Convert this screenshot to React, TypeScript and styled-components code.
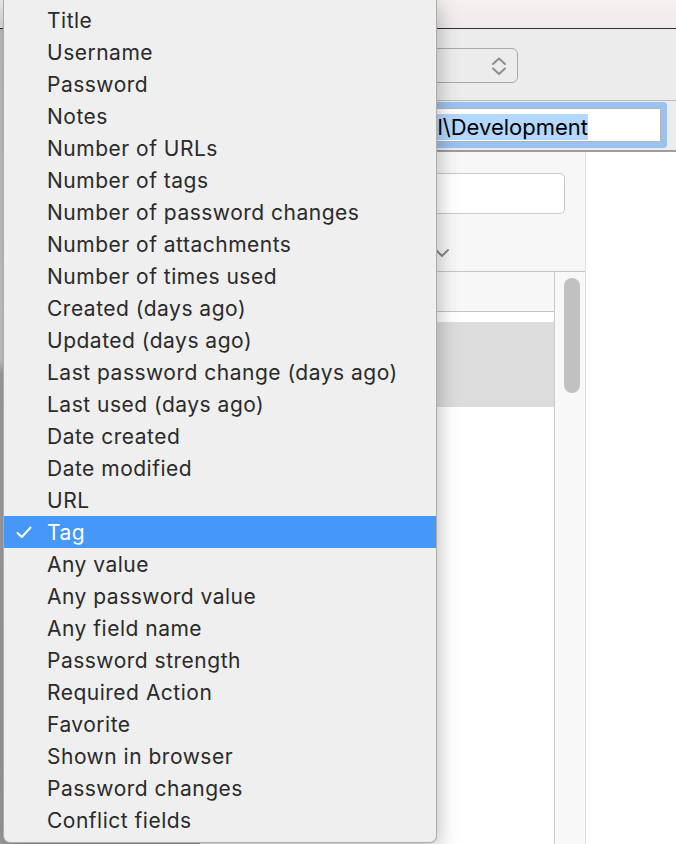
import React from 'react';
import styled, { createGlobalStyle } from 'styled-components';

const Global = createGlobalStyle`
  html, body { margin: 0; padding: 0; }
  body { width: 676px; height: 844px; overflow: hidden; font-family: Inter, "Liberation Sans", sans-serif; }
  #root { width: 676px; height: 844px; }
`;

const Stage = styled.div`
  position: relative;
  width: 676px;
  height: 844px;
  overflow: hidden;
  display: flex;
  flex-direction: column;
  background: #fff;
`;

const TitleBar = styled.div`
  flex: none;
  height: 29px;
  box-sizing: border-box;
  background: linear-gradient(#f5f1f1, #efebeb);
  border-bottom: 1px solid #2f2f2f;
`;

const Body = styled.div`
  flex: 1;
  display: flex;
  min-height: 0;
`;

const Sidebar = styled.div`
  flex: none;
  width: 200px;
  background: linear-gradient(#cbcbcb 0, #d3d3d3 330px, #aaaaaa 345px, #a3a3a3 100%);
`;

const Content = styled.div`
  flex: 1;
  display: flex;
  flex-direction: column;
  min-width: 0;
`;

const Toolbar = styled.div`
  flex: none;
  height: 72px;
  box-sizing: border-box;
  background: #ececec;
  border-bottom: 1px solid #bcbcbc;
  display: flex;
  justify-content: flex-end;
  align-items: flex-start;
  padding: 19px 158px 0 0;
`;

const PopupButton = styled.div`
  width: 240px;
  height: 35px;
  box-sizing: border-box;
  border: 1.5px solid #a9a9a9;
  border-radius: 6px;
  background: #ececec;
  display: flex;
  align-items: center;
  justify-content: flex-end;
  padding-right: 10px;
`;

const PathBar = styled.div`
  flex: none;
  height: 51px;
  box-sizing: border-box;
  background: #ececec;
  border-bottom: 2px solid #9d9d9d;
  padding: 7px 15px 0 0;
  display: flex;
  justify-content: flex-end;
  align-items: flex-start;
`;

const PathField = styled.div`
  width: 420px;
  height: 34px;
  box-sizing: border-box;
  background: #fff;
  border: 1px solid #b4b4b4;
  border-radius: 1px;
  box-shadow: 0 0 0 6px #99c2ef;
  display: flex;
  justify-content: flex-end;
  align-items: center;
  padding-right: 72px;
  overflow: hidden;
  white-space: nowrap;
`;

const Selected = styled.span`
  display: inline-block;
  height: 26px;
  line-height: 26px;
  margin-top: 4px;
  font-size: 22px;
  color: #000;
  background: #b3d7ff;
`;

const Main = styled.div`
  flex: 1;
  display: flex;
  min-height: 0;
`;

const ListPanel = styled.div`
  flex: none;
  width: 386px;
  box-sizing: border-box;
  background: #f7f7f7;
  border-right: 1px solid #e1e1e1;
  display: flex;
  flex-direction: column;
`;

const FilterArea = styled.div`
  flex: none;
  height: 120px;
  box-sizing: border-box;
  border-bottom: 1px solid #c6c6c6;
  padding: 21px 20px 0 0;
  display: flex;
  flex-direction: column;
  align-items: flex-end;
`;

const SearchField = styled.div`
  width: 300px;
  height: 41px;
  box-sizing: border-box;
  background: #fff;
  border: 1px solid #c9c9c9;
  border-radius: 5px;
`;

const ChevronRow = styled.div`
  align-self: stretch;
  padding: 34px 0 0 234px;
  display: flex;
`;

const ListArea = styled.div`
  flex: 1;
  display: flex;
  min-height: 0;
`;

const ListBody = styled.div`
  flex: 1;
  background: #fff;
  border-right: 1px solid #cbcbcb;
  display: flex;
  flex-direction: column;
`;

const ListHeader = styled.div`
  flex: none;
  height: 40px;
  box-sizing: border-box;
  background: #f7f7f7;
  border-bottom: 1px solid #c4c4c4;
`;

const ListRow = styled.div<{ $selected?: boolean; $h: number }>`
  flex: none;
  height: ${(p) => p.$h}px;
  background: ${(p) => (p.$selected ? '#dcdcdc' : '#fff')};
`;

const ScrollTrack = styled.div`
  flex: none;
  width: 30px;
  background: #f8f8f8;
  padding: 6px 0 0 9px;
  box-sizing: border-box;
`;

const ScrollThumb = styled.div`
  width: 16px;
  height: 115px;
  border-radius: 8px;
  background: #c1c1c1;
`;

const DetailPanel = styled.div`
  flex: 1;
  background: #fff;
`;

const Menu = styled.div`
  position: absolute;
  left: 3px;
  top: -1px;
  width: 434px;
  box-sizing: border-box;
  padding: 4px 0 6px;
  background: #efefef;
  border: 1px solid rgba(0, 0, 0, 0.28);
  border-radius: 0 0 7px 7px;
  box-shadow: 0 6px 22px rgba(0, 0, 0, 0.3);
  display: flex;
  flex-direction: column;
`;

const MenuItem = styled.div<{ $selected?: boolean }>`
  height: 32px;
  display: flex;
  align-items: center;
  padding-left: 12px;
  font-size: 21px;
  letter-spacing: 0.5px;
  white-space: nowrap;
  color: ${(p) => (p.$selected ? '#fff' : '#2a2a2a')};
  background: ${(p) => (p.$selected ? '#4598f8' : 'transparent')};
`;

const CheckSlot = styled.span`
  flex: none;
  width: 31px;
  display: flex;
  align-items: center;
`;

const items = [
  'Title',
  'Username',
  'Password',
  'Notes',
  'Number of URLs',
  'Number of tags',
  'Number of password changes',
  'Number of attachments',
  'Number of times used',
  'Created (days ago)',
  'Updated (days ago)',
  'Last password change (days ago)',
  'Last used (days ago)',
  'Date created',
  'Date modified',
  'URL',
  'Tag',
  'Any value',
  'Any password value',
  'Any field name',
  'Password strength',
  'Required Action',
  'Favorite',
  'Shown in browser',
  'Password changes',
  'Conflict fields',
];

const Check = () => (
  <svg width="16" height="13" viewBox="0 0 16 13" fill="none">
    <path d="M1.5 7 L5.8 11 L14.5 1.5" stroke="#fff" strokeWidth="2" strokeLinecap="round" strokeLinejoin="round" />
  </svg>
);

const UpDown = () => (
  <svg width="16" height="20" viewBox="0 0 16 20" fill="none">
    <path d="M2 8 L8 2.5 L14 8" stroke="#8e8e8e" strokeWidth="2" strokeLinecap="round" strokeLinejoin="round" />
    <path d="M2 12.5 L8 18 L14 12.5" stroke="#8e8e8e" strokeWidth="2" strokeLinecap="round" strokeLinejoin="round" />
  </svg>
);

const Chevron = () => (
  <svg width="16" height="10" viewBox="0 0 16 10" fill="none">
    <path d="M2 2 L8 8 L14 2" stroke="#8a8a8a" strokeWidth="2" strokeLinecap="round" strokeLinejoin="round" />
  </svg>
);

export default function App() {
  return (
    <Stage>
      <Global />
      <TitleBar />
      <Body>
        <Sidebar />
        <Content>
          <Toolbar>
            <PopupButton>
              <UpDown />
            </PopupButton>
          </Toolbar>
          <PathBar>
            <PathField>
              <Selected>Personal\Development</Selected>
            </PathField>
          </PathBar>
          <Main>
            <ListPanel>
              <FilterArea>
                <SearchField />
                <ChevronRow>
                  <Chevron />
                </ChevronRow>
              </FilterArea>
              <ListArea>
                <ListBody>
                  <ListHeader />
                  <ListRow $h={10} />
                  <ListRow $h={85} $selected />
                </ListBody>
                <ScrollTrack>
                  <ScrollThumb />
                </ScrollTrack>
              </ListArea>
            </ListPanel>
            <DetailPanel />
          </Main>
        </Content>
      </Body>
      <Menu>
        {items.map((label) => (
          <MenuItem key={label} $selected={label === 'Tag'}>
            <CheckSlot>{label === 'Tag' ? <Check /> : null}</CheckSlot>
            {label}
          </MenuItem>
        ))}
      </Menu>
    </Stage>
  );
}
